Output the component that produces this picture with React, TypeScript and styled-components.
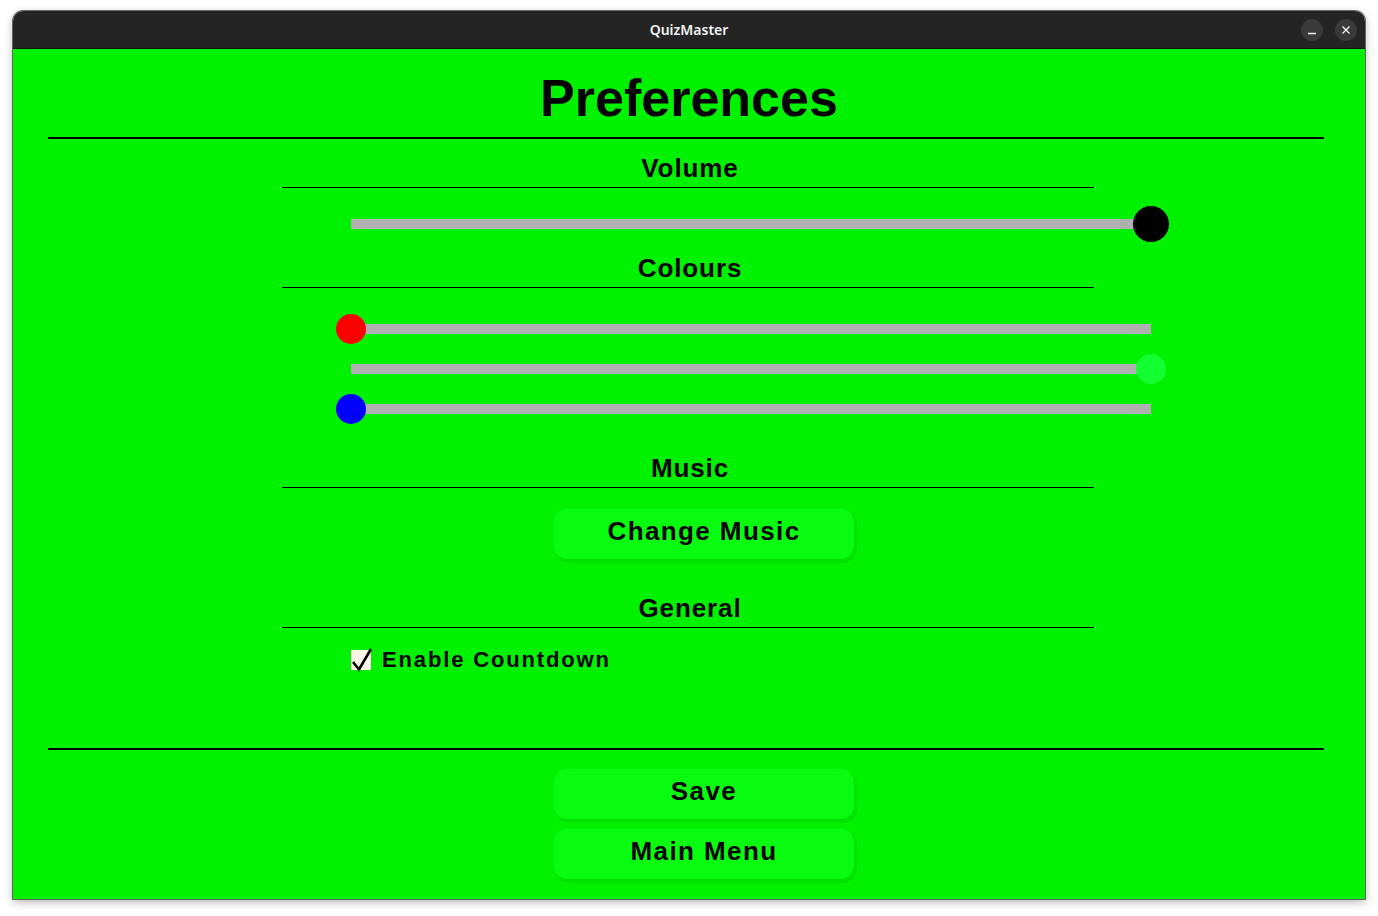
import React from 'react';
import styled, { createGlobalStyle } from 'styled-components';

const GlobalStyle = createGlobalStyle`
  html, body {
    margin: 0;
    padding: 0;
    background: #ffffff;
  }
  * {
    box-sizing: border-box;
  }
`

const Desktop = styled.div`
  width: 1378px;
  height: 916px;
  padding: 11px 13px 0;
  overflow: hidden;
`

const Window = styled.div`
  width: 1352px;
  height: 888px;
  display: flex;
  flex-direction: column;
  border-radius: 10px 10px 0 0;
  overflow: hidden;
  box-shadow: 0 0 0 1px rgba(0, 0, 0, 0.55), 0 3px 10px rgba(0, 0, 0, 0.3);
`

const TitleBar = styled.div`
  height: 38px;
  flex-shrink: 0;
  background: #242424;
  border-bottom: 1px solid #111;
  display: flex;
  align-items: center;
  justify-content: center;
  position: relative;
  font-family: "Noto Sans", "DejaVu Sans", sans-serif;
  font-size: 14px;
  font-weight: 600;
  color: #f2f2f2;
`

const TitleButtons = styled.div`
  position: absolute;
  right: 8px;
  top: 8px;
  display: flex;
  gap: 12px;
`

const TitleButton = styled.div`
  width: 22px;
  height: 22px;
  border-radius: 50%;
  background: #3a3a3a;
  display: flex;
  align-items: center;
  justify-content: center;
`

const Content = styled.div`
  flex: 1;
  background: #00f200;
  display: flex;
  flex-direction: column;
  font-family: "Liberation Sans", Arial, sans-serif;
  color: #000;
`

const Title = styled.h1`
  margin: 19px 0 0;
  height: 60px;
  line-height: 60px;
  text-align: center;
  font-size: 52px;
  font-weight: 700;
`

const MainRule = styled.div<{ $top: number }>`
  margin: ${p => p.$top}px 41px 0 35px;
  height: 2px;
  background: #000;
`

const Column = styled.div`
  margin-left: 269px;
  width: 812px;
  display: flex;
  flex-direction: column;
`

const SectionHeading = styled.h2<{ $top: number }>`
  margin: ${p => p.$top}px 0 0;
  height: 35px;
  line-height: 30px;
  padding-bottom: 4px;
  border-bottom: 1px solid #000;
  text-align: center;
  font-size: 26px;
  font-weight: 700;
  letter-spacing: 0.9px;
  padding-left: 4px;
`

const SliderRow = styled.div<{ $top: number; $knob: number }>`
  margin: ${p => p.$top}px 0 0 69px;
  width: 800px;
  height: ${p => p.$knob}px;
  display: flex;
  align-items: center;
  position: relative;
`

const Track = styled.div`
  width: 100%;
  height: 10px;
  background: #b0b0b0;
`

const Knob = styled.div<{ $size: number; $color: string }>`
  position: absolute;
  top: 0;
  width: ${p => p.$size}px;
  height: ${p => p.$size}px;
  border-radius: 50%;
  background: ${p => p.$color};
`

const ButtonRow = styled.div<{ $top: number }>`
  margin: ${p => p.$top}px 0 0 541px;
  display: flex;
`

const Button = styled.button`
  width: 300px;
  height: 50px;
  border: none;
  border-radius: 13px;
  background: #08fc10;
  box-shadow: 2px 3px 0 1px rgba(0, 120, 0, 0.12);
  font-family: "Liberation Sans", Arial, sans-serif;
  font-size: 26px;
  font-weight: 700;
  letter-spacing: 1.4px;
  color: #000;
  padding: 0 0 5px;
  cursor: pointer;
`

const CheckRow = styled.label`
  margin: 22px 0 0 69px;
  height: 20px;
  display: flex;
  align-items: center;
  gap: 11px;
  font-size: 22px;
  font-weight: 700;
  letter-spacing: 1.85px;
`

const CheckBox = styled.span`
  width: 20px;
  height: 20px;
  background: #fdf5e8;
  position: relative;
  flex-shrink: 0;
`

const CheckMark = styled.svg`
  position: absolute;
  left: 0;
  top: -1px;
  overflow: visible;
`

type SliderProps = { value: number; knob: number; color: string; top: number };

const Slider = ({ value, knob, color, top }: SliderProps) => (
  <SliderRow $top={top} $knob={knob}>
    <Track />
    <Knob $size={knob} $color={color} style={{ left: value * 800 - knob / 2 }} />
  </SliderRow>
);

const App = () => {
  return (
    <Desktop>
      <GlobalStyle />
      <Window>
        <TitleBar>
          QuizMaster
          <TitleButtons>
            <TitleButton>
              <svg width="10" height="10" viewBox="0 0 10 10">
                <line x1="1" y1="8.5" x2="9" y2="8.5" stroke="#f2f2f2" strokeWidth="1.4" />
              </svg>
            </TitleButton>
            <TitleButton>
              <svg width="10" height="10" viewBox="0 0 10 10">
                <path d="M1.5 1.5 L8.5 8.5 M8.5 1.5 L1.5 8.5" stroke="#f2f2f2" strokeWidth="1.4" />
              </svg>
            </TitleButton>
          </TitleButtons>
        </TitleBar>
        <Content>
          <Title>Preferences</Title>
          <MainRule $top={9} />
          <Column>
            <SectionHeading $top={14}>Volume</SectionHeading>
            <Slider top={18} knob={36} color="#000000" value={1} />
            <SectionHeading $top={11}>Colours</SectionHeading>
            <Slider top={26} knob={30} color="#ff0000" value={0} />
            <Slider top={10} knob={30} color="#12ff32" value={1} />
            <Slider top={10} knob={30} color="#0000ff" value={0} />
            <SectionHeading $top={29}>Music</SectionHeading>
          </Column>
          <ButtonRow $top={21}>
            <Button>Change Music</Button>
          </ButtonRow>
          <Column>
            <SectionHeading $top={34}>General</SectionHeading>
            <CheckRow>
              <CheckBox>
                <CheckMark width="22" height="22" viewBox="0 0 22 22">
                  <path d="M2 13 L8 20.5 L20 0" fill="none" stroke="#000" strokeWidth="2.6" />
                </CheckMark>
              </CheckBox>
              Enable Countdown
            </CheckRow>
          </Column>
          <MainRule $top={78} />
          <ButtonRow $top={19}>
            <Button>Save</Button>
          </ButtonRow>
          <ButtonRow $top={10}>
            <Button>Main Menu</Button>
          </ButtonRow>
        </Content>
      </Window>
    </Desktop>
  );
};

export default App;
